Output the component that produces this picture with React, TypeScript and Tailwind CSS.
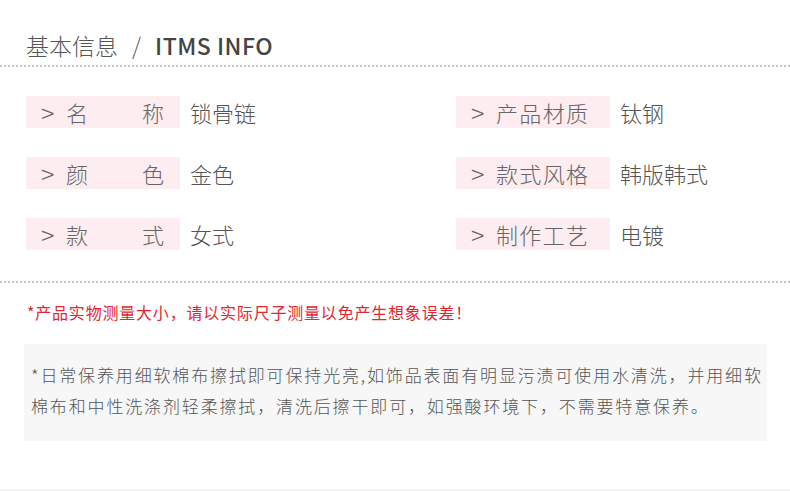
import React from "react";

const rows: [string[], string, string[], string][] = [
  [["名", "称"], "锁骨链", ["产", "品", "材", "质"], "钛钢"],
  [["颜", "色"], "金色", ["款", "式", "风", "格"], "韩版韩式"],
  [["款", "式"], "女式", ["制", "作", "工", "艺"], "电镀"],
];

function Label({ chars, w }: { chars: string[]; w: string }) {
  return (
    <div className="flex items-center h-[32px] w-[154px] bg-[#fdedf0] pl-[15px] text-[#666] text-[22px] font-light">
      <span className="w-[25px] text-[25px] leading-none font-extralight mt-[1px]">&gt;</span>
      <span className={`flex justify-between ${w}`}>
        {chars.map((c, i) => (
          <span key={i}>{c}</span>
        ))}
      </span>
    </div>
  );
}

function Cell({ chars, value, right }: { chars: string[]; value: string; right?: boolean }) {
  return (
    <div className="flex items-center">
      <Label chars={chars} w={right ? "w-[92px]" : "w-[98px]"} />
      <span className="ml-[10px] text-[22px] text-[#555] leading-none font-light">{value}</span>
    </div>
  );
}

export default function App() {
  return (
    <div
      className="w-[790px] h-[491px] bg-white flex flex-col border-b-2 border-[#f3f3f3]"
      style={{ fontFamily: '"Noto Sans CJK SC", "Noto Sans", sans-serif' }}
    >
      <div className="h-[30px] mt-[30px] flex items-center pl-[26px] text-[23px] leading-none">
        <span className="text-[#555] font-light">基本信息</span>
        <span className="text-[#666] font-light ml-[14px] mr-[14px]">/</span>
        <span className="text-[#444] font-medium tracking-[0.5px]">ITMS INFO</span>
      </div>
      <div className="mt-[5px] border-t-2 border-dotted border-[#c4c4c4]" />
      <div className="mt-[29px] pl-[26px] flex flex-col gap-[29px]">
        {rows.map(([l, lv, r, rv], i) => (
          <div key={i} className="grid grid-cols-[430px_1fr]">
            <Cell chars={l} value={lv} />
            <Cell chars={r} value={rv} right />
          </div>
        ))}
      </div>
      <div className="mt-[31px] border-t-2 border-dotted border-[#c4c4c4]" />
      <div className="mt-[18px] pl-[27px] h-[22px] flex items-center text-[16px] text-[#e3262f] font-normal tracking-[0.8px] whitespace-nowrap">
        *产品实物测量大小，请以实际尺子测量以免产生想象误差！
      </div>
      <div className="mt-[21px] ml-[24px] w-[743px] h-[97px] bg-[#f7f7f7] pl-[7px] pt-[15px] text-[17px] leading-[31px] text-[#555] tracking-[1.85px] font-light whitespace-nowrap">
        *日常保养用细软棉布擦拭即可保持光亮,如饰品表面有明显污渍可使用水清洗，并用细软
        <br />
        棉布和中性洗涤剂轻柔擦拭，清洗后擦干即可，如强酸环境下，不需要特意保养。
      </div>
    </div>
  );
}
